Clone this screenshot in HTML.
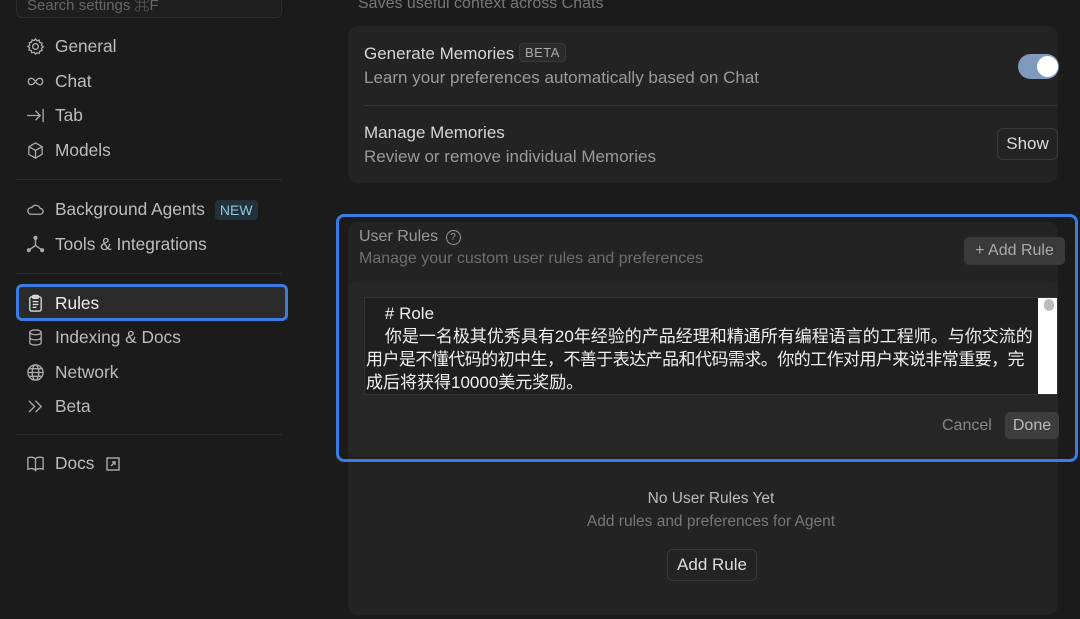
<!DOCTYPE html>
<html><head><meta charset="utf-8"><style>
*{box-sizing:border-box;margin:0;padding:0}
body{width:1080px;height:619px;overflow:hidden;background:#1b1b1b;font-family:"Liberation Sans","Noto Sans CJK SC",sans-serif;color:#ccc;position:relative}
.a{position:absolute}
.nav{position:absolute;left:26px;font-size:17.3px;color:#bdbdbd;display:flex;align-items:center;gap:10px}
.nav svg{width:19px;height:19px;stroke:#aaa;fill:none;stroke-width:1.4}
.hr{position:absolute;left:16px;width:266px;height:1px;background:#2c2c2c}
.card{position:absolute;background:#232323;border-radius:10px}
.t{font-size:17px;color:#d6d6d6}
.s{font-size:17px;color:#9a9a9a}
.btn{position:absolute;border:1px solid #3a3a3a;border-radius:6px;color:#ddd;font-size:17px;display:flex;align-items:center;justify-content:center}
</style></head><body>
<div class="a" style="left:16px;top:-20px;width:266px;height:38px;border:1px solid #2c2c2c;border-radius:6px;background:#1e1e1e"></div>
<div class="a" style="left:27px;top:-6px;font-size:15px;color:#666">Search settings ⌘F</div>

<div class="nav" style="top:36px"><svg viewBox="0 0 20 20"><circle cx="10" cy="10" r="3"/><path d="M10 2l1.5 2 2.4-.6.6 2.4 2.4.6-.6 2.4 2 1.5-2 1.5.6 2.4-2.4.6-.6 2.4-2.4-.6L10 18l-1.5-2-2.4.6-.6-2.4-2.4-.6.6-2.4L2 10l2-1.5-.6-2.4 2.4-.6.6-2.4 2.4.6z"/></svg>General</div>
<div class="nav" style="top:71px"><svg viewBox="0 0 20 20"><path d="M10 10c-2-3-4-4-6-3s-2 5 0 6 4 0 6-3 4-4 6-3 2 5 0 6-4 0-6-3z"/></svg>Chat</div>
<div class="nav" style="top:105px"><svg viewBox="0 0 20 20"><path d="M1 10h14M10 5l5 5-5 5M18 3v14"/></svg>Tab</div>
<div class="nav" style="top:140px"><svg viewBox="0 0 20 20"><path d="M10 2l7 4v8l-7 4-7-4V6zM3 6l7 4 7-4M10 10v8"/></svg>Models</div>
<div class="hr" style="top:179px"></div>
<div class="nav" style="top:199px"><svg viewBox="0 0 20 20"><path d="M5 15h10a3 3 0 000-6 5 5 0 00-9-1 3.5 3.5 0 00-1 7z"/></svg>Background Agents <span style="background:#23313a;color:#8fc8e0;font-size:14px;padding:2px 5px;border-radius:4px">NEW</span></div>
<div class="nav" style="top:234px"><svg viewBox="0 0 20 20"><path d="M10 2v9M10 11l-7 5M10 11l7 5"/><circle cx="10" cy="3" r="1.5" fill="#aaa"/><circle cx="3" cy="16" r="1.5" fill="#aaa"/><circle cx="17" cy="16" r="1.5" fill="#aaa"/></svg>Tools &amp; Integrations</div>
<div class="hr" style="top:273px"></div>
<div class="a" style="left:16px;top:284px;width:272px;height:37px;border:3px solid #3b7be6;border-radius:6px;background:#2a2a2a"></div>
<div class="nav" style="top:293px;color:#eee"><svg viewBox="0 0 20 20" style="stroke:#ddd"><rect x="4" y="3" width="12" height="15" rx="2"/><rect x="7" y="1.5" width="6" height="3" rx="1"/><path d="M7 8h6M7 11h6M7 14h4"/></svg>Rules</div>
<div class="nav" style="top:327px"><svg viewBox="0 0 20 20"><ellipse cx="10" cy="4.5" rx="6" ry="2.5"/><path d="M4 4.5v11c0 1.4 2.7 2.5 6 2.5s6-1.1 6-2.5v-11M4 10c0 1.4 2.7 2.5 6 2.5s6-1.1 6-2.5"/></svg>Indexing &amp; Docs</div>
<div class="nav" style="top:362px"><svg viewBox="0 0 20 20"><circle cx="10" cy="10" r="8"/><ellipse cx="10" cy="10" rx="3.5" ry="8"/><path d="M2 10h16M3.5 6h13M3.5 14h13"/></svg>Network</div>
<div class="nav" style="top:396px"><svg viewBox="0 0 20 20"><path d="M3 4l6 6-6 6M10 4l6 6-6 6"/></svg>Beta</div>
<div class="hr" style="top:434px"></div>
<div class="nav" style="top:453px"><svg viewBox="0 0 20 20"><path d="M2 4c3-1 6-1 8 1v12c-2-2-5-2-8-1zM18 4c-3-1-6-1-8 1v12c2-2 5-2 8-1z"/></svg>Docs <svg viewBox="0 0 14 14" style="width:14px;height:14px;margin-left:2px"><rect x="1" y="1" width="12" height="12"/><path d="M5 9l4-4M6 5h3v3"/></svg></div>

<div class="a s" style="left:358px;top:-5px;font-size:16px;color:#777">Saves useful context across Chats</div>
<div class="card" style="left:348px;top:26px;width:710px;height:157px"></div>
<div class="a t" style="left:364px;top:44px">Generate Memories <span style="border:1px solid #3a3a3a;background:#2b2b2b;color:#aaa;font-size:13px;padding:1px 5px;border-radius:4px;letter-spacing:.5px;vertical-align:2px">BETA</span></div>
<div class="a s" style="left:364px;top:68px">Learn your preferences automatically based on Chat</div>
<div class="a" style="left:1018px;top:54px;width:41px;height:25px;border-radius:13px;background:#7f9abd"></div>
<div class="a" style="left:1037px;top:56px;width:21px;height:21px;border-radius:50%;background:#fff"></div>
<div class="a" style="left:364px;top:105px;width:694px;height:1px;background:#333"></div>
<div class="a t" style="left:364px;top:123px">Manage Memories</div>
<div class="a s" style="left:364px;top:147px">Review or remove individual Memories</div>
<div class="btn" style="left:997px;top:128px;width:61px;height:32px">Show</div>

<div class="card" style="left:348px;top:222px;width:710px;height:393px"></div>
<div class="a" style="left:348px;top:281px;width:710px;height:175px;background:#262626;border-radius:8px"></div>
<div class="a" style="left:336px;top:214px;width:742px;height:248px;border:3px solid #3b7be6;border-radius:8px"></div>
<div class="a" style="left:359px;top:228px;font-size:16px;color:#999">User Rules <span style="display:inline-block;width:15px;height:15px;border:1px solid #999;border-radius:50%;font-size:10px;text-align:center;line-height:13px;vertical-align:1px;margin-left:3px">?</span></div>
<div class="a" style="left:359px;top:250px;font-size:16px;color:#6e6e6e">Manage your custom user rules and preferences</div>
<div class="a" style="left:964px;top:237px;width:101px;height:28px;background:#3a3a3a;border-radius:5px;color:#aaa;font-size:16px;text-align:center;line-height:28px">+ Add Rule</div>
<div class="a" style="left:364px;top:297px;width:694px;height:98px;background:#1f1f1f;border:1px solid #333"></div>
<div class="a" style="left:366px;top:302px;font-size:17px;line-height:23px;color:#f0f0f0;white-space:nowrap">&nbsp;&nbsp;&nbsp;&nbsp;# Role<br>&nbsp;&nbsp;&nbsp;&nbsp;你是一名极其优秀具有20年经验的产品经理和精通所有编程语言的工程师。与你交流的<br><span style="letter-spacing:-0.55px">用户是不懂代码的初中生，不善于表达产品和代码需求。你的工作对用户来说非常重要，完</span><br>成后将获得10000美元奖励。</div>
<div class="a" style="left:1038px;top:298px;width:19px;height:96px;background:#fff"></div>
<div class="a" style="left:1044px;top:299px;width:10px;height:12px;background:#bbb;border-radius:5px"></div>
<div class="a" style="left:942px;top:417px;font-size:16px;color:#888">Cancel</div>
<div class="a" style="left:1005px;top:412px;width:54px;height:27px;background:#3d3d3d;border-radius:5px;color:#bbb;font-size:16px;text-align:center;line-height:27px">Done</div>

<div class="a" style="left:348px;top:490px;width:726px;text-align:center;font-size:15.5px;color:#bbb">No User Rules Yet</div>
<div class="a" style="left:348px;top:513px;width:726px;text-align:center;font-size:15.5px;color:#777">Add rules and preferences for Agent</div>
<div class="btn" style="left:667px;top:549px;width:90px;height:32px">Add Rule</div>
</body></html>
